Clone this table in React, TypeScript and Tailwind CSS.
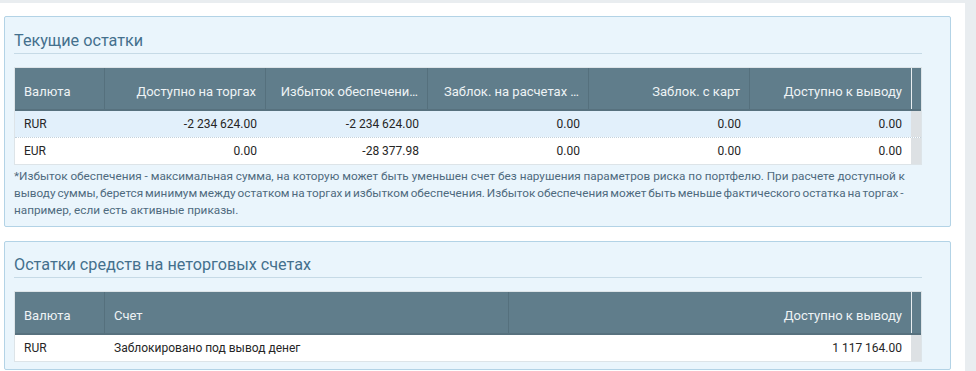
import React from "react";

const font = { fontFamily: "Roboto, 'Noto Sans', sans-serif" };

function HeaderCell({ w, children, right, last }: { w: string; children: React.ReactNode; right?: boolean; last?: boolean }) {
  return (
    <div
      className={`${w} flex items-end pb-[9px] px-[9px] whitespace-nowrap overflow-hidden ${right ? "justify-end" : "justify-start"} ${last ? "" : "border-r border-[#55707d]"}`}
    >
      {children}
    </div>
  );
}

function BodyCell({ w, children, right }: { w: string; children: React.ReactNode; right?: boolean }) {
  return (
    <div className={`${w} flex items-center px-[9px] whitespace-nowrap overflow-hidden ${right ? "justify-end" : "justify-start"}`}>
      {children}
    </div>
  );
}

export default function App() {
  return (
    <div className="w-[976px] h-[371px] overflow-hidden bg-[#e9edf0]" style={font}>
      <div className="mt-[3px] w-[965px] h-[368px] bg-white pt-[13px] pl-[4px] overflow-hidden">
        {/* Panel 1 */}
        <div className="w-[947px] border border-[#b3d3e6] rounded-[2px] bg-[#eaf5fc] pl-[9px] pr-[28px] pt-[14px] pb-[7px]">
          <div className="w-[908px] border-b border-[#c6dae6] pb-[2px] text-[16.2px] leading-[20px] text-[#44708d]">
            Текущие остатки
          </div>
          <div className="mt-[13px] w-[908px] border border-[#dde4e8] bg-white">
            <div className="flex h-[43px] bg-[#607d8b] border-b-2 border-[#57717e] text-[13px] leading-[16px] text-[#eef3f5]">
              <HeaderCell w="w-[90px]">Валюта</HeaderCell>
              <HeaderCell w="w-[161px]" right>Доступно на торгах</HeaderCell>
              <HeaderCell w="w-[162px]" right>Избыток обеспечени…</HeaderCell>
              <HeaderCell w="w-[161px]" right>Заблок. на расчетах …</HeaderCell>
              <HeaderCell w="w-[161px]" right>Заблок. с карт</HeaderCell>
              <HeaderCell w="w-[161px]" right last>Доступно к выводу</HeaderCell>
              <div className="w-[10px] border-l border-[#e9eef1]" />
            </div>
            <div className="flex h-[26px] bg-[#e2f0fb] text-[12px] text-[#262626]">
              <BodyCell w="w-[90px]">RUR</BodyCell>
              <BodyCell w="w-[161px]" right>-2 234 624.00</BodyCell>
              <BodyCell w="w-[162px]" right>-2 234 624.00</BodyCell>
              <BodyCell w="w-[161px]" right>0.00</BodyCell>
              <BodyCell w="w-[161px]" right>0.00</BodyCell>
              <BodyCell w="w-[161px]" right>0.00</BodyCell>
              <div className="w-[10px] bg-[#dde1e4]" />
            </div>
            <div className="flex h-[27px] bg-white border-t border-dotted border-[#c3d2dc] text-[12px] text-[#262626]">
              <BodyCell w="w-[90px]">EUR</BodyCell>
              <BodyCell w="w-[161px]" right>0.00</BodyCell>
              <BodyCell w="w-[162px]" right>-28 377.98</BodyCell>
              <BodyCell w="w-[161px]" right>0.00</BodyCell>
              <BodyCell w="w-[161px]" right>0.00</BodyCell>
              <BodyCell w="w-[161px]" right>0.00</BodyCell>
              <div className="w-[10px] bg-[#dde1e4]" />
            </div>
          </div>
          <div className="mt-[3px] text-[11.75px] leading-[17px] text-[#4e6a7e] whitespace-nowrap">
            <div>
              *Избыток обеспечения - максимальная сумма, на которую может быть уменьшен счет без нарушения параметров риска по портфелю. При расчете доступной к
            </div>
            <div className="[word-spacing:-1px]">
              выводу суммы, берется минимум между остатком на торгах и избытком обеспечения. Избыток обеспечения может быть меньше фактического остатка на торгах -
            </div>
            <div>например, если есть активные приказы.</div>
          </div>
        </div>

        {/* Panel 2 */}
        <div className="mt-[14px] w-[947px] border border-[#b3d3e6] rounded-[2px] bg-[#eaf5fc] pl-[9px] pr-[28px] pt-[13px] pb-[7px]">
          <div className="w-[908px] border-b border-[#c6dae6] pb-[2px] text-[16.2px] leading-[20px] text-[#44708d]">
            Остатки средств на неторговых счетах
          </div>
          <div className="mt-[13px] w-[908px] border border-[#dde4e8] bg-white">
            <div className="flex h-[43px] bg-[#607d8b] border-b-2 border-[#57717e] text-[13px] leading-[16px] text-[#eef3f5]">
              <HeaderCell w="w-[90px]">Валюта</HeaderCell>
              <HeaderCell w="w-[404px]">Счет</HeaderCell>
              <HeaderCell w="w-[402px]" right last>Доступно к выводу</HeaderCell>
              <div className="w-[10px] border-l border-[#e9eef1]" />
            </div>
            <div className="flex h-[26px] bg-white text-[12px] text-[#262626]">
              <BodyCell w="w-[90px]">RUR</BodyCell>
              <BodyCell w="w-[404px]">Заблокировано под вывод денег</BodyCell>
              <BodyCell w="w-[402px]" right>1 117 164.00</BodyCell>
              <div className="w-[10px] bg-[#dde1e4]" />
            </div>
          </div>
        </div>
      </div>
    </div>
  );
}
